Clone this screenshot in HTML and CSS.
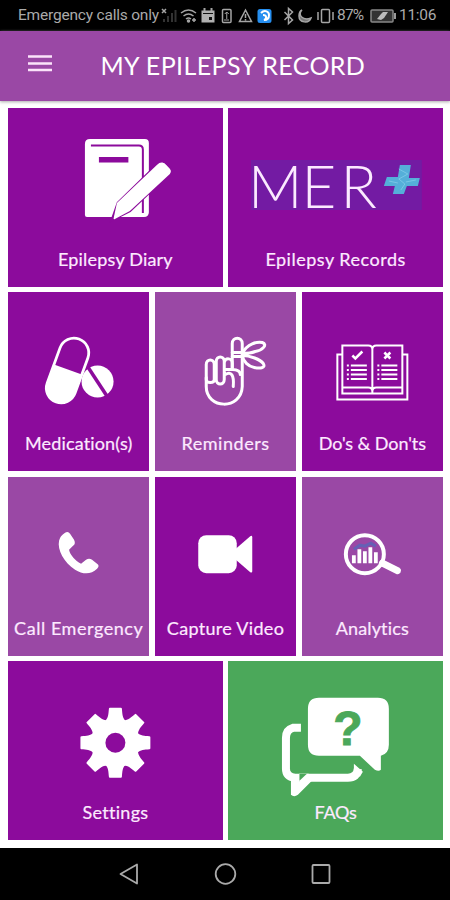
FILE: index.html
```html
<!DOCTYPE html>
<html lang="en">
<head>
<meta charset="utf-8">
<title>My Epilepsy Record</title>
<link rel="stylesheet" href="styles.css">
</head>
<body>
<div class="status">
  <span class="carrier">Emergency calls only</span>
  <svg class="status-icons" viewBox="160 0 175 31" fill="none" stroke="#a5a5a5" stroke-width="1.5">
    <path d="M162 9l4 4m0-4l-4 4"/>
    <path d="M164 22v-3M168 22v-6M172 22V13M175.500 22V10" stroke="#333" stroke-width="2"/>
    <path d="M181 13q7.500-6 15 0M183.500 16q5-4 10 0M186 19q2.500-2 5 0"/><circle cx="188.500" cy="21" r="1" fill="#a5a5a5"/><path d="M192 20h4m-2-2v4"/>
    <path d="M201.500 10.500h13v12h-13z" fill="#b0b0b0" stroke="none"/><path d="M204.500 8v3m7-3v3" stroke-width="2"/><path d="M203 13.500h10" stroke="#111" stroke-width="1"/><path d="M209 17h3v3h-3z" fill="#111" stroke="none"/>
    <rect x="222.500" y="9.500" width="8.500" height="13" rx="1"/><path d="M226.750 12v7m-2-5l2-2 2 2M224 20h5" stroke-width="1"/>
    <path d="M245.500 10l6 11.500h-12zM245.500 14v4m0 1v1.500"/>
    <rect x="257.500" y="9" width="14" height="14" rx="2.500" fill="#268ff0" stroke="none"/><path d="M261 13c4-4 8-1 8 2 0 4-3 5-5 5 3-1 3-5-1-5" stroke="#fff" stroke-width="2"/>
    <path d="M284.500 12l8 8-4 3.500V8.500l4 3.500-8 8"/>
    <path d="M302 10c-5 5 1 11 9 8-2 6-12 5-12-2 0-3 1-5 3-6z" fill="#777"/>
    <rect x="321.500" y="9.500" width="8" height="13" rx="1"/><path d="M318 12v8m15-8v8"/>
  </svg>
  <span class="percent">87%</span>
  <svg class="battery" viewBox="367 0 29 31"><rect x="369" y="10" width="22" height="12" rx="1" fill="#333" stroke="#888" stroke-width="1.500"/><path d="M393 13v6" stroke="#999" stroke-width="2"/><path d="M375 19l4-5 2-2h5l-4 6-3 2z" fill="#bbb"/></svg>
  <span class="clock">11:06</span>
</div>
<header class="bar">
  <svg class="menu" viewBox="0 0 24 17"><path d="M0 1.500h24M0 8.500h24M0 15h24" stroke="#fbe3fa" stroke-width="2.500"/></svg>
  <h1 class="title">MY EPILEPSY RECORD</h1>
</header>
<main class="grid">
  <a class="tile half">
    <svg class="icon" viewBox="8 108 215 138">
      <path d="M90 139H145q4 0 4 4v69q0 5-5 5H87q-2 0-2-2V144q0-5 5-5z" fill="#fff"/>
      <path d="M91 145.500H139q4 0 4 4V213" fill="none" stroke="#8c0b9c" stroke-width="2"/>
      <path d="M99 157h29.500v5.500H99z" fill="#8c0b9c"/>
      <path d="M118 203L158 164q5-5 9 0l3 3q3 3 0 6L130 211l-18 9z" fill="#fff" stroke="#8c0b9c" stroke-width="2.500"/>
      <path d="M117 203l40-38q5-5 9 0l4 4q2 2 0 5l-40 37-15 8q-2 1-1-2z" fill="#fff"/>
    </svg>
    <span class="label diary">Epilepsy Diary</span>
  </a>
  <a class="tile half">
    <svg class="icon" viewBox="228 108 215 138">
      <path d="M251 160h171v50H251z" fill="#731ba3"/>
      <text class="logo" y="208"><tspan x="248">M</tspan><tspan x="301.500">E</tspan><tspan x="340.500">R</tspan></text>
      <path d="M400 165h11l-2 13h11l-2 8h-11l-3 8h-11l2-8h-11l3-9h11z" fill="#55afd9"/><path d="M399 169l9 5-9 5 6 5-4 6M389 181l9 2m8-1l10-2" fill="none" stroke="#78c6e6"/>
    </svg>
    <span class="label records">Epilepsy Records</span>
  </a>
  <a class="tile">
    <svg class="icon" viewBox="8 292.500 141.300 138">
      <g transform="translate(67.500 371) rotate(20)"><rect x="-14.800" y="-33.500" width="29.600" height="67" rx="14.800" fill="none" stroke="#fff" stroke-width="2.800"/><path d="M-14.800-1h29.600v19.700a14.800 14.800 0 01-29.600 0z" fill="#fff"/></g>
      <circle cx="97.500" cy="382" r="16" fill="#fff"/><path d="M87.500 367l19 29" stroke="#8c0b9c" stroke-width="3.500"/>
    </svg>
    <span class="label medication">Medication(s)</span>
  </a>
  <a class="tile light">
    <svg class="icon" viewBox="154.800 292.500 141.300 138" fill="none" stroke="#fff" stroke-width="3" stroke-linecap="round" stroke-linejoin="round">
      <path d="M206 378v9c0 23 35 24 36 0v-43c0-7-10-7-10 0v24"/>
      <path d="M206 380v-15c0-6 8-6 8 0v15c0 4-8 4-8 0zM216 380v-18c0-6 8-6 8 0v18c0 6-8 6-8 0zM224 363c1-5 8-5 8 1v5M224 370h8c6 0 8 2 8 5M225 375c6-4 9 1 8 12"/>
      <path d="M232 353h10M232 357h10M242 354c5-10 15-12 20-11 6 2 0 8-7 9-5 2-8 2-13 2M242 356c8 0 18 4 21 8 3 5-4 5-9 4-6-1-11-6-12-12"/>
    </svg>
    <span class="label reminders">Reminders</span>
  </a>
  <a class="tile">
    <svg class="icon" viewBox="301.700 292.500 141.300 138" fill="none" stroke="#fff" stroke-width="2">
      <path d="M342 355h-5v45h70v-45h-5"/>
      <path d="M342 346h26q4 0 4 4 0-4 4-4h26v48h-60zM372 350v44M342 388h26q4 0 4 4 0-4 4-4h26"/>
      <path d="M352 356l3 3 7-7M384 353l6 6m0-6l-6 6" stroke-width="2.500"/>
      <path d="M346.500 366h2m2 0h16M346.500 370.500h2m2 0h16M346.500 375h2m2 0h16M346.500 379.500h2m2 0h16M377 366h2m2 0h16M377 370.500h2m2 0h16M377 375h2m2 0h16M377 379.500h2m2 0h16"/>
    </svg>
    <span class="label dos">Do's &amp; Don'ts</span>
  </a>
  <a class="tile light">
    <svg class="icon" viewBox="8 476.800 141.300 138"><path d="M65 532.500q3-2 5 1l4 6q2 4-1 6l-4 4c1 5 6 11 12 14l5-4q3-2 6 0l5 4q3 2 0 5c-6 6-14 6-22 1-11-7-18-20-16-29q1-5 6-8z" fill="#fff"/></svg>
    <span class="label call">Call Emergency</span>
  </a>
  <a class="tile">
    <svg class="icon" viewBox="154.800 476.800 141.300 138"><rect x="198" y="535" width="38.500" height="38" rx="8" fill="#fff"/><path d="M235 549l15-13q2-1 2 1v34q0 2-2 1l-15-13z" fill="#fff"/></svg>
    <span class="label video">Capture Video</span>
  </a>
  <a class="tile light">
    <svg class="icon" viewBox="301.700 476.800 141.300 138">
      <circle cx="364.500" cy="554" r="19" fill="none" stroke="#fff" stroke-width="4"/>
      <path d="M382 563l15 7.500" stroke="#fff" stroke-width="7" stroke-linecap="round"/>
      <path d="M353.500 549l6-4 5 1 6-3 5 3" fill="none" stroke="#6560b5" stroke-width="3"/>
      <path d="M353.500 563v-8M359 563v-14M364.500 563v-12M370 563v-16M375.500 563v-11" stroke="#fff" stroke-width="3.800"/>
    </svg>
    <span class="label analytics">Analytics</span>
  </a>
  <a class="tile half">
    <svg class="icon" viewBox="8 661.200 215 138">
      <g transform="translate(115.500 743)" fill="#fff"><g id="teeth"><path id="tooth" d="M-10-22C-7-25-7-29-6.500-34q0-1 1-1h11q1 0 1 1C7-29 7-25 10-22V22C7 25 7 29 6.500 34q0 1-1 1h-11q-1 0-1-1C-7 29-7 25-10 22z"/><use href="#tooth" transform="rotate(45)"/></g><use href="#teeth" transform="rotate(90)"/><circle r="24.500"/><circle r="10" fill="#8c0b9c"/></g>
    </svg>
    <span class="label settings">Settings</span>
  </a>
  <a class="tile half green">
    <svg class="icon" viewBox="228 661.200 215 138">
      <path d="M319 698h59q11 0 11 11v36q0 9-8 11v14q-2 2-6 0l-15-14h-41q-11 0-11-11v-36q0-11 11-11z" fill="#fff"/>
      <path d="M301 728h-8q-7 2-7 10v31q0 8 9 9h53q9 0 10-9" fill="none" stroke="#fff" stroke-width="8"/>
      <path d="M354 764l9 8-3 5-6-4zM291 778v17q3 3 7 0l14-14zM299 774h10l-10 8z" fill="#fff"/>
      <path d="M299.500 774v7l7.500-7z" fill="#4ba85a"/>
      <text class="question" x="348" y="745">?</text>
    </svg>
    <span class="label faqs">FAQs</span>
  </a>
</main>
<nav class="navbar">
  <svg viewBox="0 848 450 52" fill="none" stroke="#aaa" stroke-width="1.800" stroke-linejoin="round"><path d="M137 864.500v19l-16.500-9.500z"/><circle cx="225.500" cy="874" r="9.800"/><rect x="312.500" y="865" width="17" height="18" rx="1"/></svg>
</nav>
</body>
</html>
```
FILE: styles.css
```css
* { box-sizing: border-box; }
body { margin: 0; width: 450px; height: 900px; overflow: hidden; background: #fff; font-family: Lato, sans-serif; display: flex; flex-direction: column; }
.status { height: 30.5px; flex: none; background: #000; display: flex; align-items: center; color: #aaa; font: 15.5px/31px Roboto, sans-serif; padding: 1px 0 0 18px; white-space: nowrap; }
.carrier { width: 142px; letter-spacing: -.2px; }
.status-icons { width: 175px; height: 31px; }
.percent { width: 32px; margin-left: 2px; letter-spacing: -.8px; }
.battery { width: 29px; height: 31px; }
.clock { margin-left: 1px; letter-spacing: -.3px; }
.bar { height: 70px; flex: none; background: #9a48a5; display: flex; align-items: center; padding: 0 0 2px 27.5px; box-shadow: 0 1px 3px #aaa; }
.menu { width: 24px; height: 17px; margin-top: -2px; }
.title { margin: 1px 0 0 49px; color: #fff; font-size: 25px; font-weight: 400; line-height: 30px; letter-spacing: .38px; white-space: nowrap; }
.grid { flex: none; height: 747.5px; padding: 7.5px 7px 0 8px; display: grid; grid-template-columns: repeat(6, 1fr); grid-auto-rows: 179px; gap: 5.4px; }
.tile { grid-column: span 2; background: #8c0b9c; display: flex; flex-direction: column; align-items: center; min-width: 0; }
.half { grid-column: span 3; }
.light { background: #9a48a5; }
.green { background: #4ba85a; }
.icon { width: 100%; height: 138px; flex: none; }
.label { color: #fdeaff; font-size: 18px; line-height: 26px; font-weight: 400; white-space: nowrap; -webkit-text-stroke: .2px currentColor; }
.diary { letter-spacing: .2px; }
.records { letter-spacing: .5px; }
.medication { letter-spacing: .15px; }
.reminders { letter-spacing: .55px; }
.dos { letter-spacing: -.08px; }
.call { letter-spacing: .55px; }
.video { letter-spacing: .3px; }
.analytics { letter-spacing: .15px; }
.settings { letter-spacing: .3px; }
.faqs { letter-spacing: -.2px; }
.logo { font: 300 60px Lato, sans-serif; fill: #fbeaff; }
.question { font: bold 48px "Liberation Sans", sans-serif; text-anchor: middle; fill: #4ba85a; stroke: #4ba85a; stroke-width: 1px; }
.navbar { flex: 1; background: #000; }
.navbar svg { display: block; width: 450px; height: 52px; }
```
